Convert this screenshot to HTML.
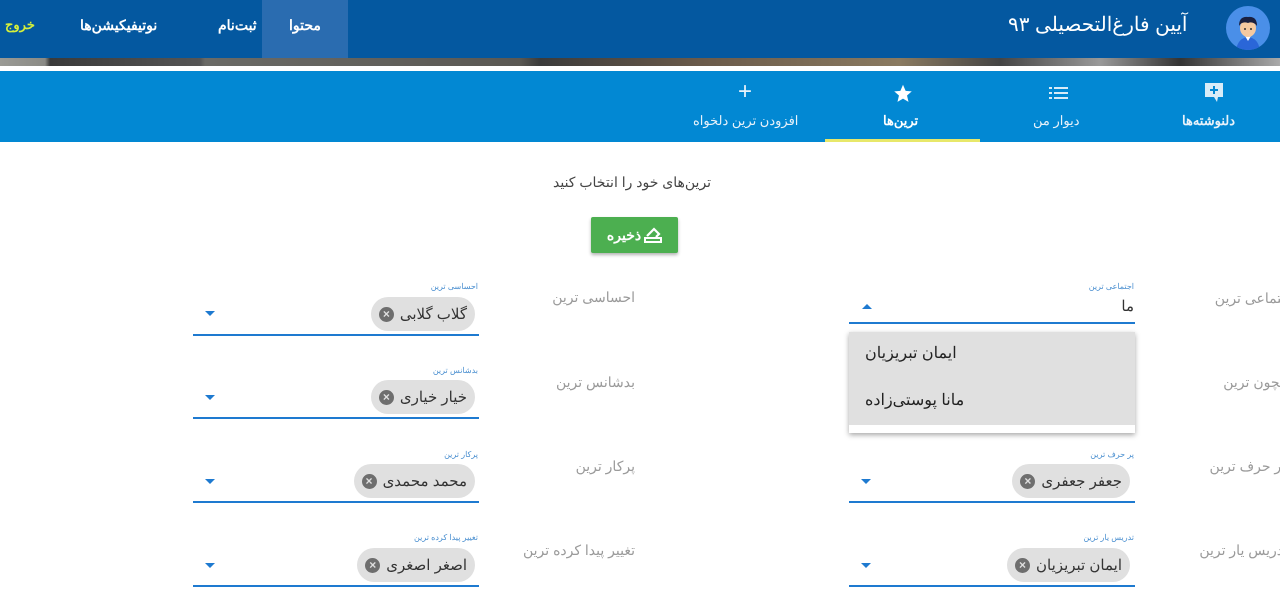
<!DOCTYPE html>
<html><head><meta charset="utf-8"><style>
*{margin:0;padding:0;box-sizing:border-box}
body{width:1280px;height:610px;overflow:hidden;background:#fff;font-family:"Liberation Sans","Noto Sans CJK SC",sans-serif;position:relative}
.a{position:absolute;white-space:nowrap}
.hdr{left:0;top:0;width:1280px;height:58px;background:#0458a0}
.strip{left:0;top:58px;width:1280px;height:8px;background:linear-gradient(90deg,#9a9a95 0,#8a8a85 45px,#3a3a3a 50px,#555 200px,#6a6a66 205px,#5a5853 520px,#3b3b3b 540px,#6a5a4a 700px,#8a7a60 900px,#444 1000px,#999 1100px,#333 1180px,#aaa 1280px)}
.tabs{left:0;top:71px;width:1280px;height:71px;background:#0288d3}
.nav{color:#fff;font-size:14px;font-weight:bold;top:17px;direction:rtl}
.tab{color:#e8f2fa;font-size:13px;top:113px;direction:rtl}
.lab{color:#9a9a9a;font-size:14px;direction:rtl}
.sm{color:#4a8fd0;font-size:8px;direction:rtl}
.line{height:2px;background:#1e7ad0}
.chip{height:34px;border-radius:17px;background:#e0e0e0;color:#333;font-size:15px;direction:rtl;display:flex;align-items:center;padding:0 8px 0 8px;gap:6px}
.x{width:15px;height:15px;border-radius:50%;background:#6e6e6e;color:#e0e0e0;font-size:12px;line-height:15px;text-align:center;font-weight:bold}
.arr{width:0;height:0;border-left:5px solid transparent;border-right:5px solid transparent;border-top:5px solid #1e7ad0}
</style></head><body>
<div class="a hdr"></div>
<div class="a" style="left:262px;top:0;width:86px;height:58px;background:#2a6cb0"></div>
<div class="a nav" style="left:5px;color:#d6f03a;font-size:13px">خروج</div>
<div class="a nav" style="left:80px">نوتیفیکیشن‌ها</div>
<div class="a nav" style="left:218px">ثبت‌نام</div>
<div class="a nav" style="left:289px">محتوا</div>
<div class="a" style="left:1008px;top:12px;color:#fff;font-size:20px;direction:rtl">آیین فارغ‌التحصیلی ۹۳</div>
<div class="a" style="left:1226px;top:6px;width:44px;height:44px;border-radius:50%;background:#4a8fe8;overflow:hidden">
<svg width="44" height="44" viewBox="0 0 44 44"><path d="M10 44 Q12 32 22 31 Q32 32 34 44Z" fill="#2a66d8"/><path d="M19 30 L22 35 L25 30Z" fill="#fff"/><ellipse cx="22" cy="22" rx="8" ry="9" fill="#f5c9a0"/><path d="M13 20 Q13 10 22 11 Q31 10 31 20 Q27 15 22 17 Q16 15 13 20Z" fill="#1a2040"/><circle cx="19" cy="23" r="1" fill="#333"/><circle cx="25" cy="23" r="1" fill="#333"/></svg></div>
<div class="a strip"></div>
<div class="a tabs"></div>
<div class="a" style="left:825px;top:139px;width:155px;height:3px;background:#e8e86a"></div>
<svg class="a" style="left:1204px;top:82px" width="20" height="22" viewBox="0 0 20 22"><path d="M1 1H19V15H14L13 20L10 15H1Z" fill="#d8ecf8"/><path d="M10 4V12M6 8H14" stroke="#0288d3" stroke-width="2"/></svg>
<div class="a tab" style="left:1182px;font-weight:bold">دلنوشته‌ها</div>
<svg class="a" style="left:1049px;top:86px" width="20" height="14" viewBox="0 0 20 14"><path d="M0 2H3M5 2H19M0 7H3M5 7H19M0 12H3M5 12H19" stroke="#d8ecf8" stroke-width="2"/></svg>
<div class="a tab" style="left:1033px">دیوار من</div>
<svg class="a" style="left:892px;top:83px" width="22" height="21" viewBox="0 0 24 24"><path d="M12 2l3 7 7 .6-5.4 4.7 1.7 7.2L12 17.8 5.7 21.5l1.7-7.2L2 9.6 9 9z" fill="#fff"/></svg>
<div class="a tab" style="left:883px;color:#fff;font-weight:bold">ترین‌ها</div>
<div class="a" style="left:738px;top:80px;color:#e8f2fa;font-size:24px;line-height:24px">+</div>
<div class="a tab" style="left:693px">افزودن ترین دلخواه</div>

<div class="a" style="left:553px;top:174px;color:#444;font-size:14px;direction:rtl">ترین‌های خود را انتخاب کنید</div>
<div class="a" style="left:591px;top:217px;width:87px;height:36px;background:#4caf50;border-radius:2px;box-shadow:0 2px 3px rgba(0,0,0,.3);color:#fff;font-size:14px;font-weight:bold;display:flex;align-items:center;justify-content:center;gap:3px;direction:rtl"><svg width="18" height="16" viewBox="0 0 18 16"><path d="M3 9L10 2L15 7L12 10" fill="none" stroke="#fff" stroke-width="2.2"/><path d="M1 11H17V15H1Z" fill="none" stroke="#fff" stroke-width="2"/></svg><span>ذخیره</span></div>

<div class="a lab" style="right:645px;top:289px">احساسی ترین</div>
<div class="a sm" style="right:802px;top:282px">احساسی ترین</div>
<div class="a chip" style="right:805px;top:297px">گلاب گلابی <span class="x">×</span></div>
<div class="a arr" style="left:205px;top:311px"></div>
<div class="a line" style="left:193px;top:334px;width:286px"></div>

<div class="a lab" style="right:645px;top:374px">بدشانس ترین</div>
<div class="a sm" style="right:802px;top:366px">بدشانس ترین</div>
<div class="a chip" style="right:805px;top:380px">خیار خیاری <span class="x">×</span></div>
<div class="a arr" style="left:205px;top:395px"></div>
<div class="a line" style="left:193px;top:417px;width:286px"></div>

<div class="a lab" style="right:645px;top:458px">پرکار ترین</div>
<div class="a sm" style="right:802px;top:450px">پرکار ترین</div>
<div class="a chip" style="right:805px;top:464px">محمد محمدی <span class="x">×</span></div>
<div class="a arr" style="left:205px;top:479px"></div>
<div class="a line" style="left:193px;top:501px;width:286px"></div>

<div class="a lab" style="right:645px;top:542px">تغییر پیدا کرده ترین</div>
<div class="a sm" style="right:802px;top:533px">تغییر پیدا کرده ترین</div>
<div class="a chip" style="right:805px;top:548px">اصغر اصغری <span class="x">×</span></div>
<div class="a arr" style="left:205px;top:563px"></div>
<div class="a line" style="left:193px;top:585px;width:286px"></div>

<div class="a lab" style="right:-14px;top:290px">اجتماعی ترین</div>
<div class="a sm" style="right:146px;top:282px">اجتماعی ترین</div>
<div class="a" style="right:146px;top:297px;font-size:15px;color:#333;direction:rtl">ما</div>
<div class="a" style="left:862px;top:304px;width:0;height:0;border-left:5px solid transparent;border-right:5px solid transparent;border-bottom:5px solid #1e7ad0"></div>
<div class="a line" style="left:849px;top:322px;width:286px"></div>

<div class="a lab" style="right:-8px;top:374px">بیچون ترین</div>
<div class="a lab" style="right:-6px;top:458px">پر حرف ترین</div>
<div class="a sm" style="right:146px;top:450px">پر حرف ترین</div>
<div class="a chip" style="right:150px;top:464px">جعفر جعفری <span class="x">×</span></div>
<div class="a arr" style="left:861px;top:479px"></div>
<div class="a line" style="left:849px;top:501px;width:286px"></div>

<div class="a lab" style="right:-8px;top:542px">تدریس یار ترین</div>
<div class="a sm" style="right:146px;top:533px">تدریس یار ترین</div>
<div class="a chip" style="right:150px;top:548px">ایمان تبریزیان <span class="x">×</span></div>
<div class="a arr" style="left:861px;top:563px"></div>
<div class="a line" style="left:849px;top:585px;width:286px"></div>

<div class="a" style="left:849px;top:332px;width:286px;height:101px;background:#fff;box-shadow:0 2px 5px rgba(0,0,0,.35)">
<div style="height:93px;background:#e0e0e0"></div></div>
<div class="a" style="left:865px;top:343px;font-size:16px;color:#222;direction:rtl">ایمان تبریزیان</div>
<div class="a" style="left:865px;top:390px;font-size:16px;color:#222;direction:rtl">مانا پوستی‌زاده</div>
</body></html>
